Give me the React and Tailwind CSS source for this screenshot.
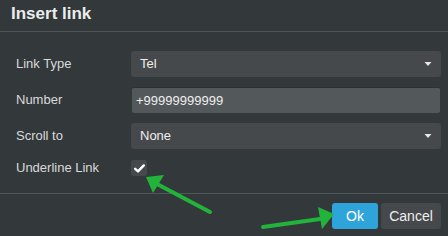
import React from 'react';

const Caret = () => (
  <svg width="8" height="5" viewBox="0 0 8 5" className="ml-auto">
    <path d="M0.5 0 H7.5 L4 4 Z" fill="#e8e8e8" />
  </svg>
);

const Row = ({ label, children }) => (
  <div className="flex items-center h-[26px]">
    <div className="w-[115px] text-[13px] text-[#d9dadb]">{label}</div>
    <div className="flex-1">{children}</div>
  </div>
);

const App = () => {
  return (
    <div className="relative w-[448px] h-[236px] bg-[#33383b] overflow-hidden" style={{ fontFamily: '"Liberation Sans", Arial, sans-serif' }}>
      {/* header */}
      <div className="h-[32px] px-[11px] flex items-center border-b border-[#50555a]">
        <h2 className="text-[17px] font-bold text-[#eceded] -mt-[4px]">Insert link</h2>
      </div>

      {/* body */}
      <div className="pl-[16px] pr-[7px] pt-[19px] flex flex-col gap-[10px] h-[161px]">
        <Row label="Link Type">
          <div className="h-[26px] rounded-[3px] bg-[#45494c] flex items-center px-[9px] pr-[9px] text-[13px] text-[#eeeeee]">
            <span>Tel</span>
            <Caret />
          </div>
        </Row>
        <Row label="Number">
          <div className="h-[26px] ml-[1px] mr-[1px] rounded-[2px] bg-[#53585b] border-t border-[#2c3033] flex items-center px-[4px] text-[13px] text-[#eeeeee]">
            +99999999999
          </div>
        </Row>
        <Row label="Scroll to">
          <div className="h-[26px] rounded-[3px] bg-[#45494c] flex items-center px-[9px] pr-[9px] text-[13px] text-[#eeeeee]">
            <span>None</span>
            <Caret />
          </div>
        </Row>
        <div className="flex items-center h-[18px]">
          <div className="w-[115px] text-[13px] text-[#d9dadb]">Underline Link</div>
          <div className="w-[16px] h-[16px] rounded-[3px] bg-[#45494c] flex items-center justify-center">
            <svg width="11" height="9" viewBox="0 0 11 9">
              <path d="M1.2 4.8 L4 7.4 L9.8 1.4" stroke="#ffffff" strokeWidth="2.4" fill="none" strokeLinecap="round" strokeLinejoin="round" />
            </svg>
          </div>
        </div>
      </div>

      {/* footer */}
      <div className="border-t border-[#50555a] h-[42px] flex items-start justify-end gap-[3px] pt-[9px] pr-[7px]">
        <button className="h-[26px] w-[46px] rounded-[3px] bg-[#2fa4db] text-[14px] text-white">Ok</button>
        <button className="h-[26px] w-[60px] rounded-[3px] bg-[#45494c] text-[14px] text-[#eeeeee]">Cancel</button>
      </div>

      {/* annotation arrows */}
      <svg className="absolute inset-0 pointer-events-none" width="448" height="236" viewBox="0 0 448 236">
        <path d="M210 212 L157 184" stroke="#22b43a" strokeWidth="4" strokeLinecap="round" />
        <polygon points="146,177 164,175 153,193" fill="#22b43a" />
        <path d="M263 227 L320 219" stroke="#22b43a" strokeWidth="4" strokeLinecap="round" />
        <polygon points="334,214 318,207 322,229" fill="#22b43a" />
      </svg>
    </div>
  );
};

export default App;
